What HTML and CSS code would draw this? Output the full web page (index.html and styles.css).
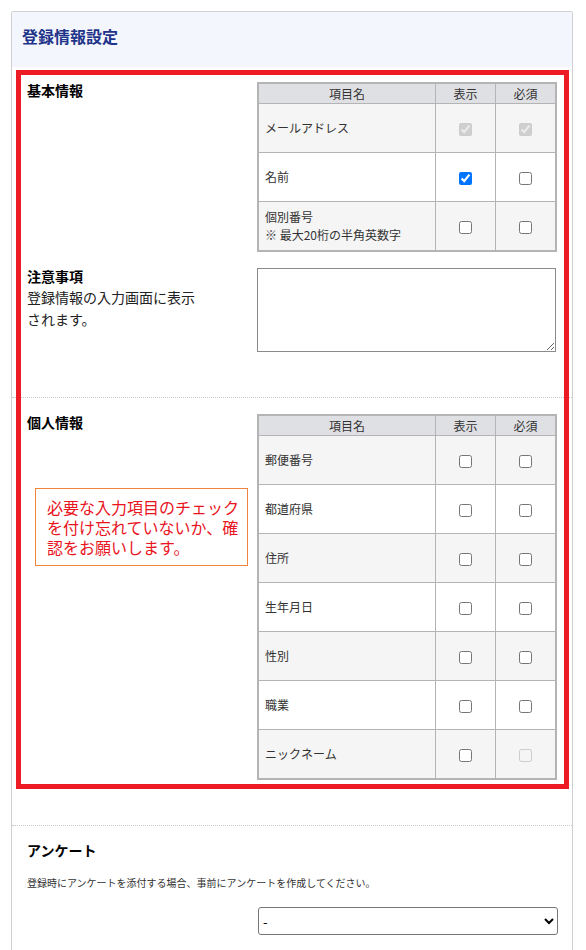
FILE: index.html
```html
<!DOCTYPE html>
<html lang="ja">
<head>
<meta charset="utf-8">
<title>登録情報設定</title>
<link rel="stylesheet" href="styles.css">
</head>
<body>
<div class="page">
  <div class="card">
    <div class="card-header"><h2 class="card-title">登録情報設定</h2></div>

    <section class="section">
      <div class="row">
        <div class="label"><strong class="label-title">基本情報</strong></div>
        <div class="field">
          <table class="items">
            <thead>
              <tr><th class="col-name">項目名</th><th class="col-show">表示</th><th class="col-req">必須</th></tr>
            </thead>
            <tbody>
              <tr><td class="name">メールアドレス</td><td class="check"><input type="checkbox" checked disabled></td><td class="check"><input type="checkbox" checked disabled></td></tr>
              <tr><td class="name">名前</td><td class="check"><input type="checkbox" checked></td><td class="check"><input type="checkbox"></td></tr>
              <tr><td class="name">個別番号<br>※ 最大20桁の半角英数字</td><td class="check"><input type="checkbox"></td><td class="check"><input type="checkbox"></td></tr>
            </tbody>
          </table>
        </div>
      </div>
      <div class="row row-gap">
        <div class="label">
          <strong class="label-title">注意事項</strong>
          <p class="label-desc">登録情報の入力画面に表示されます。</p>
        </div>
        <div class="field"><textarea class="notes"></textarea></div>
      </div>
    </section>

    <section class="section">
      <div class="row">
        <div class="label"><strong class="label-title">個人情報</strong></div>
        <div class="field">
          <table class="items">
            <thead>
              <tr><th class="col-name">項目名</th><th class="col-show">表示</th><th class="col-req">必須</th></tr>
            </thead>
            <tbody>
              <tr><td class="name">郵便番号</td><td class="check"><input type="checkbox"></td><td class="check"><input type="checkbox"></td></tr>
              <tr><td class="name">都道府県</td><td class="check"><input type="checkbox"></td><td class="check"><input type="checkbox"></td></tr>
              <tr><td class="name">住所</td><td class="check"><input type="checkbox"></td><td class="check"><input type="checkbox"></td></tr>
              <tr><td class="name">生年月日</td><td class="check"><input type="checkbox"></td><td class="check"><input type="checkbox"></td></tr>
              <tr><td class="name">性別</td><td class="check"><input type="checkbox"></td><td class="check"><input type="checkbox"></td></tr>
              <tr><td class="name">職業</td><td class="check"><input type="checkbox"></td><td class="check"><input type="checkbox"></td></tr>
              <tr><td class="name">ニックネーム</td><td class="check"><input type="checkbox"></td><td class="check"><input type="checkbox" disabled></td></tr>
            </tbody>
          </table>
        </div>
      </div>
    </section>

    <section class="section survey">
      <h3 class="label-title">アンケート</h3>
      <p class="survey-note">登録時にアンケートを添付する場合、事前にアンケートを作成してください。</p>
      <div class="row">
        <div class="label"></div>
        <div class="field"><select class="survey-select"><option>-</option></select></div>
      </div>
    </section>
  </div>

  <div class="highlight"></div>
  <div class="callout">必要な入力項目のチェックを付け忘れていないか、確認をお願いします。</div>
</div>
</body>
</html>
```

FILE: styles.css
```css
* { box-sizing: border-box; }

html, body {
  margin: 0;
  padding: 0;
  background: #fff;
  font-family: "Noto Sans CJK JP", "Noto Sans", sans-serif;
  color: #333;
}

.page {
  position: relative;
  padding: 11px 13px 0 11px;
}

.card {
  border: 1px solid #cfcfd4;
  border-radius: 2px;
  background: #fff;
  padding-bottom: 40px;
}

.card-header {
  height: 55px;
  background: #f3f6fd;
  padding: 14px 10px 0 10px;
}

.card-title {
  margin: 0;
  font-size: 16px;
  font-weight: bold;
  color: #1f3489;
  line-height: 20px;
}

.section {
  padding: 15px 15px 45px 15px;
  border-bottom: 1px dotted #c8c8c8;
}
.section + .section { padding-top: 16px; }

.row {
  display: grid;
  grid-template-columns: 230px 300px;
}
.row-gap { margin-top: 16px; }

.label-title {
  display: block;
  margin: 0;
  font-size: 14px;
  line-height: 16px;
  font-weight: bold;
  color: #000;
}

.label-desc {
  margin: 2px 0 0 0;
  width: 176px;
  font-size: 14px;
  line-height: 22px;
  color: #222;
}

.items {
  width: 300px;
  border-collapse: separate;
  border-spacing: 0;
  border: 2px solid #b4b4b4;
  font-size: 12px;
  color: #333;
}

.items th,
.items td {
  border-right: 1px solid #b4b4b4;
  border-bottom: 1px solid #b4b4b4;
}
.items th:last-child,
.items td:last-child { border-right: none; }
.items tbody tr:last-child td { border-bottom: none; }

.items th {
  height: 20px;
  padding: 0;
  background: #dfe0e4;
  font-weight: normal;
  line-height: 16px;
  text-align: center;
}

.items .col-show { width: 60px; }
.items .col-req { width: 59px; }

.items td {
  height: 49px;
  padding: 0 6px;
  line-height: 18px;
}
.items tbody tr:last-child td { height: 48px; }

.items tbody tr:nth-child(odd) td { background: #f5f5f5; }
.items tbody tr:nth-child(even) td { background: #fff; }

.items td.check {
  text-align: center;
  padding: 0;
}

.items input[type="checkbox"] {
  margin: 0;
  width: 13px;
  height: 13px;
  vertical-align: middle;
}

.notes {
  display: block;
  width: 299px;
  height: 84px;
  margin: 0;
  border: 1px solid #8a8a8a;
  resize: vertical;
}

.survey { border-bottom: none; padding-bottom: 20px; }

.survey-note {
  margin: 18px 0 17px 0;
  font-size: 10px;
  line-height: 14px;
  color: #333;
}

.survey-select {
  display: block;
  width: 300px;
  height: 28px;
  margin: 0 0 0 1px;
  font-family: "Noto Sans CJK JP", sans-serif;
  font-size: 13px;
  color: #000;
  border: 1px solid #767676;
  border-radius: 3px;
  background: #fff;
}

.highlight {
  position: absolute;
  left: 16px;
  top: 70px;
  width: 553px;
  height: 719px;
  border: 5px solid #ed1c24;
  pointer-events: none;
}

.callout {
  position: absolute;
  left: 35px;
  top: 488px;
  width: 213px;
  height: 78px;
  padding: 8px 6px 7px 11px;
  border: 1px solid #f0843c;
  background: #fff;
  color: #e8141e;
  font-size: 16px;
  line-height: 20px;
}
```
